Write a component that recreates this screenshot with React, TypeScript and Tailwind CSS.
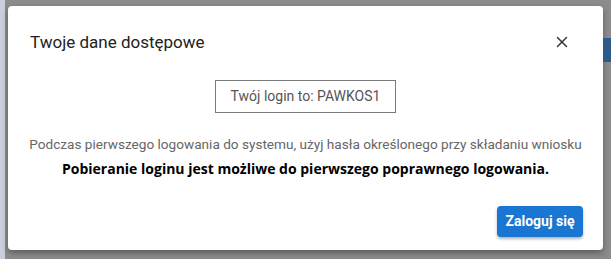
import React from 'react';
import { X } from 'lucide-react';

export default function App() {
  return (
    <div className="w-[611px] h-[259px] bg-[#8c8c8c] flex overflow-hidden" style={{ fontFamily: 'Roboto, sans-serif' }}>
      <div className="w-[5px] bg-[#c9d1dd] shrink-0" />
      <div className="flex-1 flex flex-col pt-[6px] pl-[3px]">
        <div className="flex">
          <div className="w-[595px] h-[244px] bg-white rounded-[4px] shadow-[0_3px_6px_rgba(0,0,0,0.35)] flex flex-col px-[20px]">
            <div className="flex items-center justify-between pt-[23px] h-[49px] pl-[2px]">
              <h2 className="text-[17px] text-[#222] leading-none">Twoje dane dostępowe</h2>
              <X size={18} strokeWidth={2} className="text-[#333] mr-[12px]" />
            </div>
            <div className="flex justify-center mt-[25px]">
              <div className="w-[181px] h-[33px] border border-[#7a7a7a] flex items-center justify-center text-[14px] text-[#555]">
                Twój login to: PAWKOS1
              </div>
            </div>
            <p className="text-center text-[13.6px] text-[#666] mt-[21px] leading-[20px] whitespace-nowrap">
              Podczas pierwszego logowania do systemu, użyj hasła określonego przy składaniu wniosku
            </p>
            <p className="text-center text-[14px] font-bold text-black mt-[5px] leading-[20px]" style={{ fontFamily: '"Open Sans", sans-serif' }}>
              Pobieranie loginu jest możliwe do pierwszego poprawnego logowania.
            </p>
            <div className="flex justify-end mt-[27px]">
              <button className="w-[86px] h-[31px] bg-[#1976d2] text-white text-[14px] font-bold rounded-[4px] shadow-[0_2px_3px_rgba(0,0,0,0.3)]">
                Zaloguj się
              </button>
            </div>
          </div>
          <div className="flex-1 pt-[32px]">
            <div className="h-[24px] bg-[#2e5a8c]" />
          </div>
        </div>
      </div>
    </div>
  );
}
